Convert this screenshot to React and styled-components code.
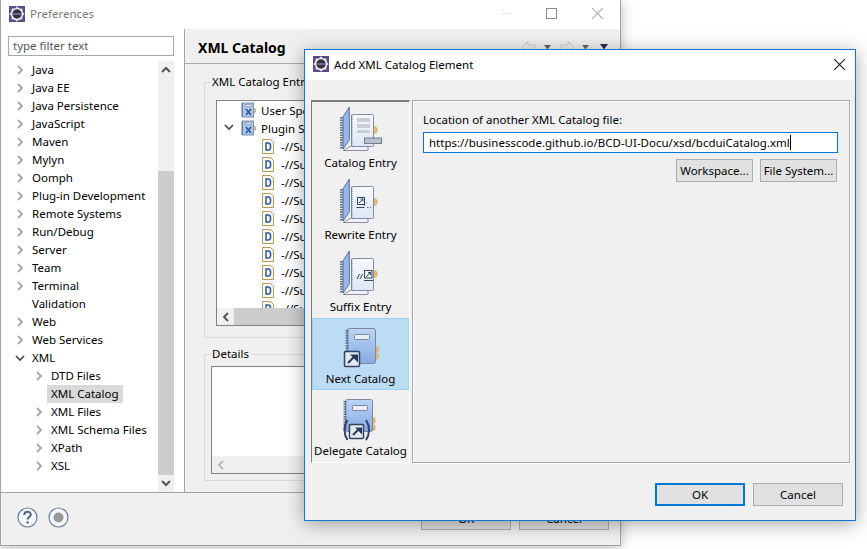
import React from "react";
import styled, { createGlobalStyle } from "styled-components";

const GlobalStyle = createGlobalStyle`
  html, body { margin: 0; padding: 0; background: #ffffff; }
  body { width: 867px; height: 549px; overflow: hidden; font-family: "Noto Sans", "Open Sans", sans-serif; font-size: 11.5px; color: #000; }
`;

const preferenceItems = [
  { label: "Java", arrow: "closed" },
  { label: "Java EE", arrow: "closed" },
  { label: "Java Persistence", arrow: "closed" },
  { label: "JavaScript", arrow: "closed" },
  { label: "Maven", arrow: "closed" },
  { label: "Mylyn", arrow: "closed" },
  { label: "Oomph", arrow: "closed" },
  { label: "Plug-in Development", arrow: "closed" },
  { label: "Remote Systems", arrow: "closed" },
  { label: "Run/Debug", arrow: "closed" },
  { label: "Server", arrow: "closed" },
  { label: "Team", arrow: "closed" },
  { label: "Terminal", arrow: "closed" },
  { label: "Validation" },
  { label: "Web", arrow: "closed" },
  { label: "Web Services", arrow: "closed" },
  { label: "XML", arrow: "open" },
  { label: "DTD Files", arrow: "closed", nested: true },
  { label: "XML Catalog", nested: true, selected: true },
  { label: "XML Files", arrow: "closed", nested: true },
  { label: "XML Schema Files", arrow: "closed", nested: true },
  { label: "XPath", arrow: "closed", nested: true },
  { label: "XSL", arrow: "closed", nested: true },
];

const dtdRows = Array.from({ length: 10 }, (_, i) => i);

function EclipseLogo() {
  return (
    <svg width="16" height="16" viewBox="0 0 16 16">
      <rect width="16" height="16" fill="#5a4a8c" />
      <path d="M8 .8v14.400M.8 8h14.400M2.900 2.900l10.200 10.200M13.100 2.900L2.900 13.100" stroke="#d9d9de" strokeWidth="2.200" />
      <circle cx="8" cy="8" r="5.500" fill="#34323f" stroke="#eeeef0" strokeWidth="1.600" />
      <rect x="4" y="7" width="8" height="2" fill="#6c6690" />
    </svg>
  );
}

function Chevron({ open }) {
  return open ? (
    <svg width="10" height="8" viewBox="0 0 10 8"><path d="M1 2l4 4 4-4" fill="none" stroke="#444" strokeWidth="1.600" /></svg>
  ) : (
    <svg width="8" height="10" viewBox="0 0 8 10"><path d="M2 1l4 4-4 4" fill="none" stroke="#a6a6a6" strokeWidth="1.800" /></svg>
  );
}

function CatalogIcon() {
  return (
    <svg width="15" height="16" viewBox="0 0 15 16">
      <path d="M12.500 5.500l2 1.500v3l-2 1.500z" fill="#e8c070" stroke="#a08850" strokeWidth=".5" />
      <rect x="1.500" y="1" width="11" height="14" fill="#a9c6ec" stroke="#7f8fb0" />
      <path d="M1 1.500v13" stroke="#5a6f9a" strokeDasharray="1 1" strokeWidth="2" />
      <rect x="4.500" y="2.500" width="6" height="2" fill="#eef3fa" stroke="#8b90a8" strokeWidth=".7" />
      <path d="M5 7l5 6M10 7l-5 6" stroke="#2b4f94" strokeWidth="1.400" />
    </svg>
  );
}

function DtdIcon() {
  return (
    <svg width="12" height="15" viewBox="0 0 12 15">
      <path d="M.5.5h8l3 3v11H.5z" fill="#fbfaf4" stroke="#b59a56" />
      <path d="M4 4h2.400c1.600 0 2.200 1.400 2.200 3.400S8 11 6.400 11H4z" fill="none" stroke="#2b5aa8" strokeWidth="1.500" />
    </svg>
  );
}

function QuestionIcon() {
  return (
    <svg width="21" height="21" viewBox="0 0 21 21">
      <circle cx="10.500" cy="10.500" r="9.500" fill="#f4f6f9" stroke="#6a7f9c" strokeWidth="1.200" />
      <path d="M7.300 8c0-4.200 6.500-4.200 6.500-.4 0 2.400-3.200 2.400-3.200 5" fill="none" stroke="#4d6486" strokeWidth="2" />
      <rect x="9.500" y="14.300" width="2.200" height="2.200" fill="#4d6486" />
    </svg>
  );
}

function RecordIcon() {
  return (
    <svg width="21" height="21" viewBox="0 0 21 21">
      <circle cx="10.500" cy="10.500" r="9.500" fill="#f4f6f9" stroke="#6a7f9c" strokeWidth="1.200" />
      <circle cx="10.500" cy="10.500" r="5" fill="#9a9a9a" />
    </svg>
  );
}

function HistoryButtons() {
  return (
    <svg width="90" height="14" viewBox="0 0 90 14">
      <path d="M1 7l6-5.500V5h7v5H7v3.500z" fill="none" stroke="#c9c9c9" />
      <path d="M23 5h7l-3.500 4.500z" fill="#666" />
      <path d="M53 7l-6-5.500V5h-7v5h7v3.500z" fill="none" stroke="#c9c9c9" />
      <path d="M61 5h7l-3.500 4.500z" fill="#666" />
      <path d="M79 4h8l-4 5.500z" fill="#2e2a55" />
    </svg>
  );
}

// the three entry icons share the spiral notebook, only the page mark differs
function SpiralBook({ children }) {
  return (
    <>
      <path d="M12 15L18.300 5V38L12 47Z" fill="#96b8ea" stroke="#5d6f98" />
      <path d="M10.500 15V47" stroke="#66748f" strokeWidth="3" strokeDasharray="1.500 1" />
      <path d="M12 48.500H37V44H20Z" fill="#eef2f8" stroke="#8a8aa0" />
      <path d="M42.500 24l3.500 2v4l-3.500 2z" fill="#eabf62" stroke="#b8965a" strokeWidth=".6" />
      <rect x="20.500" y="12.500" width="22" height="32" rx="1" fill="url(#page-fill)" stroke="#8a8aa0" />
      <path d="M21 13V44" stroke="#60708f" strokeWidth="1" strokeDasharray="1 1" />
      <defs>
        <linearGradient id="page-fill" x1="0" y1="0" x2="0" y2="1">
          <stop offset="0" stopColor="#f7f9fc" />
          <stop offset="1" stopColor="#dce8f6" />
        </linearGradient>
      </defs>
      {children}
    </>
  );
}

function CatalogEntryIcon() {
  return (
    <KindSvg viewBox="0 0 60 50">
      <SpiralBook>
        <rect x="26" y="16" width="13" height="4" fill="#c8cdd6" />
        <rect x="26" y="22" width="13" height="4" fill="#c8cdd6" />
        <rect x="26" y="28" width="13" height="3" fill="#c8cdd6" />
        <rect x="33.500" y="36" width="17" height="5.500" fill="#b9c3cf" stroke="#6f7c90" />
      </SpiralBook>
    </KindSvg>
  );
}

function RewriteEntryIcon() {
  return (
    <KindSvg viewBox="0 0 60 50">
      <SpiralBook>
        <rect x="26.500" y="23.500" width="7" height="7" fill="#f4f6fa" stroke="#33466e" />
        <path d="M28 29l4-4M29.500 25H32v2.500" stroke="#33466e" fill="none" />
        <path d="M25.500 33.500h8" stroke="#33466e" />
        <path d="M33 32l3-4M36 33.500h4" stroke="#55688e" strokeDasharray="1.500 1.500" />
      </SpiralBook>
    </KindSvg>
  );
}

function SuffixEntryIcon() {
  return (
    <KindSvg viewBox="0 0 60 50">
      <SpiralBook>
        <rect x="33.500" y="24.500" width="7.500" height="7.500" fill="#f4f6fa" stroke="#33466e" />
        <path d="M35 31l4.500-4.500M37 26.500h2.500V29" stroke="#33466e" fill="none" />
        <path d="M26 33l2.500-5M29 33l2.500-5" stroke="#33466e" />
        <path d="M33 34.500h9" stroke="#33466e" />
      </SpiralBook>
    </KindSvg>
  );
}

function ArrowSquare({ x, y, size }) {
  return (
    <>
      <rect x={x + 0.5} y={y + 0.5} width={size} height={size} rx="1" fill="#e4e9f1" stroke="#33415f" strokeWidth="1.500" />
      <path d={`M${x + 4} ${y + size - 3}L${x + size - 5} ${y + 6}`} stroke="#25375c" strokeWidth="2" />
      <path d={`M${x + 6} ${y + 3.500}h${size - 7}v${size - 7}z`} fill="#25375c" />
    </>
  );
}

function BlueBook({ x, y, width, height, id }) {
  return (
    <>
      <defs>
        <linearGradient id={id} x1="0" y1="0" x2="0" y2="1">
          <stop offset="0" stopColor="#b9d6f5" />
          <stop offset="1" stopColor="#86a9e4" />
        </linearGradient>
      </defs>
      <path d={`M${x + width} ${y + 18}l3 1.500v4l-3 1.500zM${x + width} ${y + 25}l3 1.500v4l-3 1.500z`} fill="#eabf62" stroke="#b8965a" strokeWidth=".6" />
      <rect x={x + 0.5} y={y + 0.5} width={width} height={height} rx="2" fill={`url(#${id})`} stroke="#87839a" />
      <path d={`M${x} ${y + 2}V${y + height - 1}`} stroke="#5d6f90" strokeWidth="3" strokeDasharray="1.500 1" />
      <rect x={x + 7.500} y={y + 6.500} width="15" height="5" rx="1" fill="#e8edf5" stroke="#85859a" />
    </>
  );
}

function NextCatalogIcon() {
  return (
    <KindSvg viewBox="0 0 60 50">
      <BlueBook x={16} y={10} width={28} height={35} id="next-book" />
      <ArrowSquare x={13} y={33} size={15} />
    </KindSvg>
  );
}

function DelegateCatalogIcon() {
  return (
    <KindSvg viewBox="0 0 60 50">
      <BlueBook x={14} y={9} width={27} height={32} id="delegate-book" />
      <ArrowSquare x={18} y={34} size={14} />
      <path d="M16.500 30c-4 6-4 14 0 20M35 30c4 6 4 14 0 20" fill="none" stroke="#2f4468" strokeWidth="2" />
    </KindSvg>
  );
}

const catalogKinds = [
  { label: "Catalog Entry", icon: <CatalogEntryIcon /> },
  { label: "Rewrite Entry", icon: <RewriteEntryIcon /> },
  { label: "Suffix Entry", icon: <SuffixEntryIcon /> },
  { label: "Next Catalog", icon: <NextCatalogIcon />, active: true },
  { label: "Delegate Catalog", icon: <DelegateCatalogIcon /> },
];

export default function App() {
  return (
    <Desktop>
      <GlobalStyle />
      <PreferencesWindow>
        <TitleBar $height={29} $lift={2}>
          <LogoSlot $left={8}><EclipseLogo /></LogoSlot>
          <FadedTitle>Preferences</FadedTitle>
          <WindowControls>
            <MinimizeMark />
            <MaximizeMark />
            <CloseMark $color="#a8a8a8" />
          </WindowControls>
        </TitleBar>
        <PreferencesBody>
          <Sidebar>
            <FilterInput>type filter text</FilterInput>
            <TreeFrame>
              <TreeList>
                {preferenceItems.map((item) => (
                  <TreeRow key={item.label} $nested={item.nested}>
                    <ArrowSlot>{item.arrow && <Chevron open={item.arrow === "open"} />}</ArrowSlot>
                    <TreeLabel $selected={item.selected}>{item.label}</TreeLabel>
                  </TreeRow>
                ))}
              </TreeList>
              <VerticalBar>
                <BarArrow>
                  <svg width="10" height="7" viewBox="0 0 10 7"><path d="M1 6l4-4 4 4" fill="none" stroke="#555" strokeWidth="2" /></svg>
                </BarArrow>
                <BarTrack><BarThumb /></BarTrack>
                <BarArrow>
                  <svg width="10" height="7" viewBox="0 0 10 7"><path d="M1 1l4 4 4-4" fill="none" stroke="#555" strokeWidth="2" /></svg>
                </BarArrow>
              </VerticalBar>
            </TreeFrame>
          </Sidebar>
          <MainPanel>
            <PanelHeader>
              <PanelTitle>XML Catalog</PanelTitle>
              <HistoryButtons />
            </PanelHeader>
            <PanelContent>
              <GroupBox $height={256}>
                <GroupLegend>XML Catalog Entries</GroupLegend>
                <EntriesBox>
                  <EntryRow>
                    <IconSlot $width={39}><CatalogIcon /></IconSlot>
                    <span>User Spe</span>
                  </EntryRow>
                  <EntryRow>
                    <IconSlot $width={39}>
                      <EntryChevron><Chevron open /></EntryChevron>
                      <CatalogIcon />
                    </IconSlot>
                    <span>Plugin S</span>
                  </EntryRow>
                  {dtdRows.map((row) => (
                    <EntryRow key={row}>
                      <IconSlot $width={59} $inset={2}><DtdIcon /></IconSlot>
                      <span>-//Sun</span>
                    </EntryRow>
                  ))}
                  <HorizontalBar>
                    <HorizontalArrow>
                      <svg width="7" height="10" viewBox="0 0 7 10"><path d="M6 1L2 5l4 4" fill="none" stroke="#555" strokeWidth="2" /></svg>
                    </HorizontalArrow>
                    <HorizontalThumb />
                  </HorizontalBar>
                </EntriesBox>
              </GroupBox>
              <GroupBox $height={127} $gap={16}>
                <GroupLegend>Details</GroupLegend>
                <DetailsBox>
                  <HorizontalBar>
                    <HorizontalArrow>
                      <svg width="7" height="10" viewBox="0 0 7 10"><path d="M6 1L2 5l4 4" fill="none" stroke="#bbb" strokeWidth="2" /></svg>
                    </HorizontalArrow>
                  </HorizontalBar>
                </DetailsBox>
              </GroupBox>
            </PanelContent>
          </MainPanel>
        </PreferencesBody>
        <PreferencesFooter>
          <RoundIcons>
            <QuestionIcon />
            <RecordIcon />
          </RoundIcons>
          <FooterButtons $right={11}>
            <ActionButton>OK</ActionButton>
            <ActionButton>Cancel</ActionButton>
          </FooterButtons>
        </PreferencesFooter>
      </PreferencesWindow>

      <CatalogDialog>
        <TitleBar $height={30} $lift={2}>
          <LogoSlot $left={8}><EclipseLogo /></LogoSlot>
          <DialogTitle>Add XML Catalog Element</DialogTitle>
          <DialogClose><CloseMark $color="#111" /></DialogClose>
        </TitleBar>
        <DialogBody>
          <KindList>
            {catalogKinds.map((kind) => (
              <KindItem key={kind.label} $active={kind.active}>
                <KindIcon>{kind.icon}</KindIcon>
                <span>{kind.label}</span>
              </KindItem>
            ))}
          </KindList>
          <LocationPanel>
            <FieldLabel>Location of another XML Catalog file:</FieldLabel>
            <LocationInput>
              https://businesscode.github.io/BCD-UI-Docu/xsd/bcduiCatalog.xml
              <Caret />
            </LocationInput>
            <BrowseRow>
              <BrowseButton>Workspace...</BrowseButton>
              <BrowseButton>File System...</BrowseButton>
            </BrowseRow>
          </LocationPanel>
        </DialogBody>
        <DialogFooter>
          <FooterButtons $right={12}>
            <ActionButton $primary>OK</ActionButton>
            <ActionButton>Cancel</ActionButton>
          </FooterButtons>
        </DialogFooter>
      </CatalogDialog>
    </Desktop>
  );
}

const Desktop = styled.div`
  position: relative;
  width: 867px;
  height: 549px;
  overflow: hidden;
  background: #ffffff;
`;

const PreferencesWindow = styled.div`
  position: absolute;
  left: 0;
  top: -1px;
  width: 621px;
  height: 547px;
  box-sizing: border-box;
  border: 1px solid #a3a3a3;
  display: flex;
  flex-direction: column;
  background: #f0f0f0;
  box-shadow: 0 2px 12px rgba(0, 0, 0, 0.28);
`;

const CatalogDialog = styled.div`
  position: absolute;
  left: 304px;
  top: 49px;
  width: 552px;
  height: 472px;
  box-sizing: border-box;
  border: 1px solid #0c79d6;
  display: flex;
  flex-direction: column;
  background: #f0f0f0;
  box-shadow: 0 3px 18px rgba(0, 0, 0, 0.35);
`;

const TitleBar = styled.div`
  display: flex;
  align-items: center;
  height: ${(p) => p.$height}px;
  box-sizing: border-box;
  padding-bottom: ${(p) => p.$lift}px;
  flex: none;
  background: #ffffff;
`;

const LogoSlot = styled.div`
  display: flex;
  margin-left: ${(p) => p.$left}px;
`;

const FadedTitle = styled.div`
  margin-left: 5px;
  color: #7a7a7a;
`;

const DialogTitle = styled.div`
  margin-left: 5px;
`;

const WindowControls = styled.div`
  margin-left: auto;
  display: flex;
  align-items: center;
  gap: 35px;
  padding-right: 17px;
`;

const MinimizeMark = styled.div`
  width: 10px;
  height: 1px;
  background: #e4e4e4;
`;

const MaximizeMark = styled.div`
  width: 9px;
  height: 9px;
  border: 1px solid #8a8a8a;
`;

const CloseMark = styled.div`
  position: relative;
  width: 11px;
  height: 11px;
  &::before,
  &::after {
    content: "";
    position: absolute;
    left: -2px;
    top: 5px;
    width: 15px;
    height: 1px;
    background: ${(p) => p.$color};
    transform: rotate(45deg);
  }
  &::after {
    transform: rotate(-45deg);
  }
`;

const DialogClose = styled.div`
  margin-left: auto;
  margin-right: 10px;
`;

const PreferencesBody = styled.div`
  flex: 1;
  display: flex;
  min-height: 0;
`;

const Sidebar = styled.div`
  width: 184px;
  flex: none;
  box-sizing: border-box;
  background: #ffffff;
  border-right: 1px solid #a3a3a3;
  display: flex;
  flex-direction: column;
`;

const FilterInput = styled.div`
  margin: 7px 10px 0 7px;
  height: 20px;
  box-sizing: border-box;
  border: 1px solid #a9a9a9;
  padding-left: 4px;
  line-height: 17px;
  color: #555;
  background: #fff;
`;

const TreeFrame = styled.div`
  flex: 1;
  min-height: 0;
  margin: 5px 10px 0 0;
  display: flex;
`;

const TreeList = styled.div`
  flex: 1;
  overflow: hidden;
`;

const TreeRow = styled.div`
  display: flex;
  align-items: center;
  height: 18px;
  padding-left: ${(p) => (p.$nested ? 31 : 12)}px;
`;

const ArrowSlot = styled.div`
  width: 13px;
  margin-right: 2px;
  flex: none;
  display: flex;
  align-items: center;
  justify-content: center;
`;

const TreeLabel = styled.div`
  padding: 0 4px;
  line-height: 18px;
  white-space: nowrap;
  background: ${(p) => (p.$selected ? "#d9d9d9" : "transparent")};
`;

const VerticalBar = styled.div`
  width: 16px;
  flex: none;
  display: flex;
  flex-direction: column;
  background: #f0f0f0;
`;

const BarArrow = styled.div`
  height: 17px;
  flex: none;
  display: flex;
  align-items: center;
  justify-content: center;
`;

const BarTrack = styled.div`
  flex: 1;
  display: flex;
  flex-direction: column;
  justify-content: flex-end;
`;

const BarThumb = styled.div`
  height: 304px;
  background: #cdcdcd;
`;

const MainPanel = styled.div`
  flex: 1;
  display: flex;
  flex-direction: column;
  min-width: 0;
`;

const PanelHeader = styled.div`
  height: 35px;
  flex: none;
  box-sizing: border-box;
  border-bottom: 1px solid #a9a9a9;
  padding: 2px 9px 0 13px;
  display: flex;
  align-items: center;
  justify-content: space-between;
`;

const PanelTitle = styled.div`
  font-weight: 700;
  font-size: 14px;
`;

const PanelContent = styled.div`
  flex: 1;
  padding: 18px 16px 0 19px;
`;

const GroupBox = styled.div`
  position: relative;
  height: ${(p) => p.$height}px;
  margin-top: ${(p) => p.$gap || 0}px;
  box-sizing: border-box;
  border: 1px solid #d9d9d9;
`;

const GroupLegend = styled.div`
  position: absolute;
  left: 6px;
  top: -10px;
  padding: 0 2px 0 1px;
  line-height: 17px;
  background: #f0f0f0;
`;

const EntriesBox = styled.div`
  position: relative;
  margin: 17px 0 0 11px;
  height: 226px;
  box-sizing: border-box;
  border: 1px solid #828282;
  background: #fff;
  overflow: hidden;
`;

const DetailsBox = styled.div`
  position: relative;
  margin: 11px 0 0 6px;
  height: 108px;
  box-sizing: border-box;
  border: 1px solid #828282;
  background: #fff;
`;

const EntryRow = styled.div`
  display: flex;
  align-items: center;
  height: 18px;
  white-space: nowrap;
  gap: 5px;
`;

const IconSlot = styled.div`
  position: relative;
  width: ${(p) => p.$width}px;
  box-sizing: border-box;
  padding-right: ${(p) => p.$inset || 0}px;
  flex: none;
  display: flex;
  justify-content: flex-end;
`;

const EntryChevron = styled.div`
  position: absolute;
  left: 7px;
  top: 3px;
  display: flex;
`;

const HorizontalBar = styled.div`
  position: absolute;
  left: 0;
  right: 0;
  bottom: 0;
  height: 17px;
  display: flex;
  background: #f0f0f0;
`;

const HorizontalArrow = styled.div`
  width: 17px;
  display: flex;
  align-items: center;
  justify-content: center;
`;

const HorizontalThumb = styled.div`
  width: 200px;
  background: #cdcdcd;
`;

const PreferencesFooter = styled.div`
  height: 53px;
  flex: none;
  box-sizing: border-box;
  border-top: 1px solid #a3a3a3;
  display: flex;
  justify-content: space-between;
  padding-top: 14px;
`;

const RoundIcons = styled.div`
  display: flex;
  gap: 10px;
  margin-left: 16px;
`;

const FooterButtons = styled.div`
  display: flex;
  justify-content: flex-end;
  gap: 8px;
  padding-right: ${(p) => p.$right}px;
`;

const ActionButton = styled.div`
  width: 90px;
  height: 23px;
  box-sizing: border-box;
  border: ${(p) => (p.$primary ? "2px solid #0078d7" : "1px solid #adadad")};
  background: #e1e1e1;
  display: flex;
  align-items: center;
  justify-content: center;
`;

const DialogBody = styled.div`
  height: 383px;
  flex: none;
  box-sizing: border-box;
  padding: 20px 5px 0 6px;
  display: flex;
  gap: 2px;
`;

const DialogFooter = styled.div`
  padding-top: 20px;
`;

const KindList = styled.div`
  width: 99px;
  flex: none;
  box-sizing: border-box;
  border-style: solid;
  border-color: #7d7d7d #fff #fff #7d7d7d;
  border-width: 2px 1px 1px 1px;
  display: flex;
  flex-direction: column;
`;

const KindItem = styled.div`
  height: 72px;
  flex: none;
  box-sizing: border-box;
  display: flex;
  flex-direction: column;
  align-items: center;
  padding-bottom: 2px;
  line-height: 18px;
  white-space: nowrap;
  background: ${(p) => (p.$active ? "#bcdcf4" : "transparent")};
  box-shadow: ${(p) => (p.$active ? "inset 0 0 0 1px #99d1ff" : "none")};
`;

const KindIcon = styled.div`
  display: flex;
  height: 50px;
  margin-bottom: 2px;
`;

const KindSvg = styled.svg`
  width: 60px;
  height: 50px;
  overflow: visible;
`;

const LocationPanel = styled.div`
  flex: 1;
  box-sizing: border-box;
  border: 1px solid #a9a9a9;
  box-shadow: inset 1px 1px 0 #fff, 1px 1px 0 #fff;
  padding: 10px 11px 0 10px;
  display: flex;
  flex-direction: column;
`;

const FieldLabel = styled.div`
  line-height: 18px;
`;

const LocationInput = styled.div`
  margin-top: 3px;
  height: 21px;
  box-sizing: border-box;
  border: 1px solid #0078d7;
  background: #fff;
  padding-left: 5px;
  white-space: nowrap;
  display: flex;
  align-items: center;
`;

const Caret = styled.span`
  width: 1px;
  height: 15px;
  background: #000;
`;

const BrowseRow = styled.div`
  margin-top: 6px;
  display: flex;
  justify-content: flex-end;
  gap: 7px;
  padding-right: 1px;
`;

const BrowseButton = styled.div`
  width: 77px;
  height: 23px;
  box-sizing: border-box;
  border: 1px solid #adadad;
  background: #e1e1e1;
  display: flex;
  align-items: center;
  justify-content: center;
  white-space: nowrap;
`;
